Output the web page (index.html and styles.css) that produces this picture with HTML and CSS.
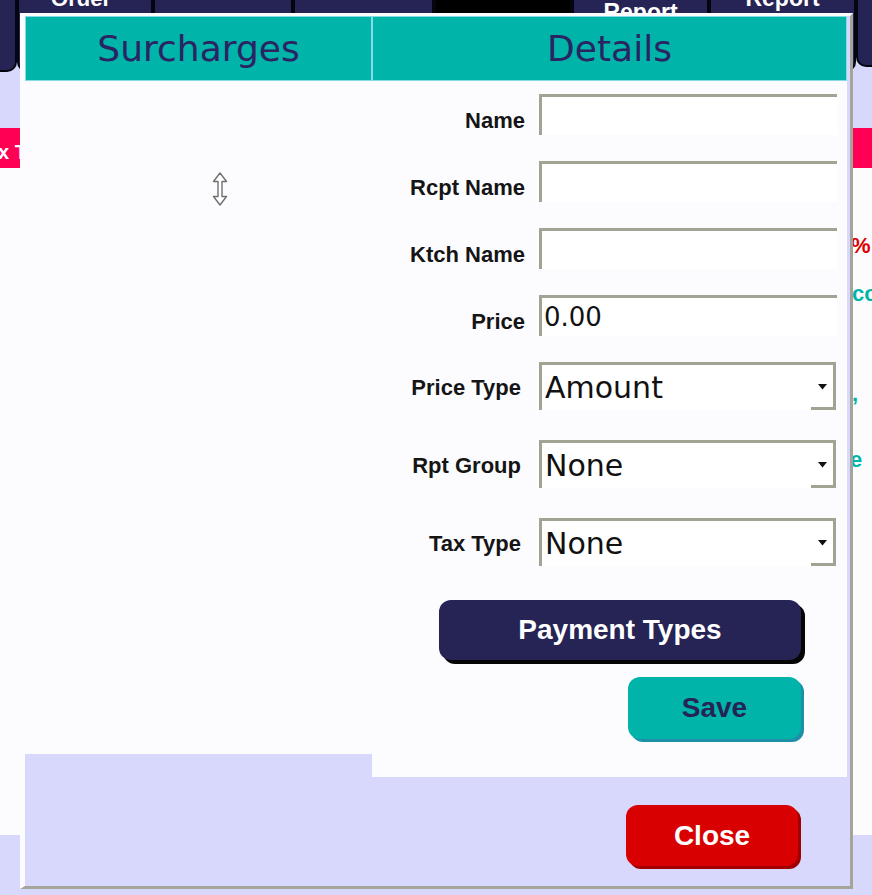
FILE: index.html
```html
<!DOCTYPE html>
<html lang="en">
<head>
<meta charset="utf-8">
<title>Surcharges</title>
<link rel="stylesheet" href="styles.css">
</head>
<body>
<div class="page">
  <div class="toolbar">
    <div class="tb tb-edge-left"></div>
    <div class="tb tb-order"><span class="tb-label lbl-order">Order</span></div>
    <div class="tb tb-plain-a"></div>
    <div class="tb tb-plain-b"></div>
    <div class="tb tb-black"></div>
    <div class="tb tb-report1"><span class="tb-label lbl-report1">Report</span></div>
    <div class="tb tb-report2"><span class="tb-label lbl-report2">Report</span></div>
    <div class="tb tb-edge-right"></div>
  </div>
  <div class="lav-band"></div>
  <div class="pink-bar"><span class="pink-text">ax Type</span></div>
  <div class="content">
    <div class="frag frag-pct">%</div>
    <div class="frag frag-co">co</div>
    <div class="frag frag-dot">,</div>
    <div class="frag frag-e">e</div>
  </div>
  <div class="footer-band"></div>
</div>

<div class="modal">
  <div class="modal-head">
    <div class="head-cell">Surcharges</div>
    <div class="head-cell">Details</div>
  </div>
  <div class="modal-body">
    <div class="panel-left">
      <svg class="cursor" width="16" height="34" viewBox="0 0 16 34"><path d="M8 1 L14.5 9.5 L10 9.5 L10 24.5 L14.5 24.5 L8 33 L1.5 24.5 L6 24.5 L6 9.5 L1.5 9.5 Z" fill="#ffffff" stroke="#707070" stroke-width="1.4" stroke-linejoin="round"/></svg>
    </div>
    <div class="panel-right">
      <div class="form">
        <div class="row">
          <div class="row-label">Name</div>
          <div class="text-input"></div>
        </div>
        <div class="row">
          <div class="row-label">Rcpt Name</div>
          <div class="text-input"></div>
        </div>
        <div class="row">
          <div class="row-label">Ktch Name</div>
          <div class="text-input"></div>
        </div>
        <div class="row">
          <div class="row-label">Price</div>
          <div class="text-input">0.00</div>
        </div>
        <div class="row row-select">
          <div class="row-label">Price Type</div>
          <div class="select"><span>Amount</span><svg class="arrow" width="9" height="6" viewBox="0 0 9 6"><path d="M0 0 H9 L4.5 5.5 Z" fill="#111"/></svg></div>
        </div>
        <div class="row row-select">
          <div class="row-label">Rpt Group</div>
          <div class="select"><span>None</span><svg class="arrow" width="9" height="6" viewBox="0 0 9 6"><path d="M0 0 H9 L4.5 5.5 Z" fill="#111"/></svg></div>
        </div>
        <div class="row row-select">
          <div class="row-label">Tax Type</div>
          <div class="select"><span>None</span><svg class="arrow" width="9" height="6" viewBox="0 0 9 6"><path d="M0 0 H9 L4.5 5.5 Z" fill="#111"/></svg></div>
        </div>
      </div>
      <div class="actions">
        <div class="btn btn-pay">Payment Types</div>
        <div class="btn btn-save">Save</div>
      </div>
    </div>
  </div>
  <div class="modal-foot">
    <div class="btn btn-close">Close</div>
  </div>
</div>
</body>
</html>
```

FILE: styles.css
```css
* { box-sizing: border-box; }
html, body { margin: 0; padding: 0; }
body {
  width: 872px;
  height: 895px;
  overflow: hidden;
  position: relative;
  background: #d8d8fc;
  font-family: "Liberation Sans", Arial, sans-serif;
}

/* background page */
.page { display: flex; flex-direction: column; width: 872px; height: 895px; }
.toolbar { display: flex; align-items: flex-start; height: 72px; flex: none; }
.tb {
  flex: none;
  height: 72px;
  background: #262454;
  border: 2px solid #05050f;
  border-top: 0;
  border-radius: 0 0 10px 10px;
  color: #fff;
  font-weight: bold;
  font-size: 23px;
  line-height: 24px;
  text-align: center;
  overflow: hidden;
}
.tb-edge-left { width: 17px; border-left: 0; border-radius: 0 0 10px 0; }
.tb-order { width: 136px; font-size: 22px; }
.tb-plain-a { width: 140px; }
.tb-plain-b { width: 141px; }
.tb-black { width: 138px; background: #000; }
.tb-report1 { width: 137px; }
.tb-report2 { width: 147px; }
.tb-edge-right { width: 20px; height: 67px; border-right: 0; border-radius: 0 0 0 10px; }
.tb-label { display: block; }
.lbl-order { margin-top: -13px; padding-right: 8px; }
.lbl-report1 { margin-top: 0; }
.lbl-report2 { margin-top: -14px; }

.lav-band { height: 56px; flex: none; }
.pink-bar {
  height: 40px;
  flex: none;
  background: #ff0055;
  color: #fff;
  font-weight: bold;
  font-size: 20px;
  line-height: 40px;
  padding-top: 4px;
  white-space: nowrap;
  overflow: hidden;
}
.pink-text { display: block; margin-left: -13px; }

.content {
  height: 667px;
  flex: none;
  background: #fcfcff;
  display: flex;
  flex-direction: column;
  font-weight: bold;
  white-space: nowrap;
}
.frag { font-size: 22px; line-height: 22px; }
.frag-pct { color: #e00000; margin: 67px 0 0 851px; }
.frag-co { color: #00b4aa; margin: 26px 0 0 852px; }
.frag-dot { color: #00b4aa; margin: 78px 0 0 852px; }
.frag-e { color: #00b4aa; margin: 44px 0 0 850px; }
.footer-band { flex: 1; }

/* modal dialog */
.modal {
  position: absolute;
  left: 20px;
  top: 13px;
  width: 833px;
  height: 876px;
  background: #d8d8fc;
  border-left: 5px solid #fcfcff;
  border-top: 3px solid #fcfcff;
  border-right: 3px solid #a4a49a;
  border-bottom: 3px solid #a4a49a;
  padding-right: 3px;
  display: flex;
  flex-direction: column;
}
.modal-head {
  display: grid;
  grid-template-columns: 347px 475px;
  height: 65px;
  flex: none;
}
.head-cell {
  background: #00b4aa;
  border: 1px solid #86dbe8;
  color: #2a2462;
  font-family: "DejaVu Sans", sans-serif;
  font-size: 36px;
  display: flex;
  align-items: center;
  justify-content: center;
}
.modal-body { display: flex; align-items: flex-start; flex: none; }
.panel-left {
  width: 347px;
  height: 673px;
  background: #fcfcff;
  position: relative;
}
.cursor { position: absolute; left: 187px; top: 91px; }
.panel-right {
  width: 475px;
  height: 696px;
  background: #fcfcff;
  padding-top: 13px;
}

.form { display: flex; flex-direction: column; gap: 26px; }
.row { display: flex; align-items: flex-end; }
.row-label {
  width: 153px;
  margin-right: 14px;
  text-align: right;
  font-weight: bold;
  font-size: 22px;
  line-height: 25px;
  padding-bottom: 2px;
  color: #151515;
  white-space: nowrap;
}
.text-input {
  width: 298px;
  height: 41px;
  border-top: 3px solid #a3a394;
  border-left: 3px solid #a3a394;
  background: #ffffff;
  font-family: "DejaVu Sans", sans-serif;
  font-size: 26px;
  line-height: 30px;
  padding: 4px 0 0 2px;
  color: #111;
}
.row-select { height: 52px; align-items: flex-start; }
.row-select .row-label {
  width: 149px;
  margin-right: 18px;
  line-height: 48px;
  padding: 2px 0 0 0;
}
.select {
  position: relative;
  width: 297px;
  height: 48px;
  border: 3px solid #a3a394;
  border-bottom: 0;
  background: #ffffff;
  display: flex;
  align-items: flex-start;
  justify-content: space-between;
  font-family: "DejaVu Sans", sans-serif;
  font-size: 30px;
  padding: 5px 0 0 3px;
  color: #111;
}
.select::after {
  content: "";
  position: absolute;
  right: -3px;
  bottom: 0;
  width: 25px;
  height: 3px;
  background: #a3a394;
}
.arrow { margin: 14px 6px 0 0; flex: none; }

.actions {
  display: flex;
  flex-direction: column;
  align-items: flex-end;
  padding-right: 46px;
  margin-top: 30px;
}
.btn {
  display: flex;
  align-items: center;
  justify-content: center;
  font-weight: bold;
  font-size: 28px;
  border-radius: 12px;
}
.btn-pay {
  width: 362px;
  height: 60px;
  background: #262454;
  color: #ffffff;
  box-shadow: 4px 4px 0 #050505;
}
.btn-save {
  width: 173px;
  height: 62px;
  margin-top: 17px;
  background: #00b4aa;
  color: #262454;
  box-shadow: 3px 3px 0 #1d8fa8;
}
.modal-foot {
  display: flex;
  justify-content: flex-end;
  padding: 28px 49px 0 0;
}
.btn-close {
  width: 172px;
  height: 61px;
  background: #d80000;
  color: #ffffff;
  box-shadow: 3px 3px 0 #a00000;
}
```
